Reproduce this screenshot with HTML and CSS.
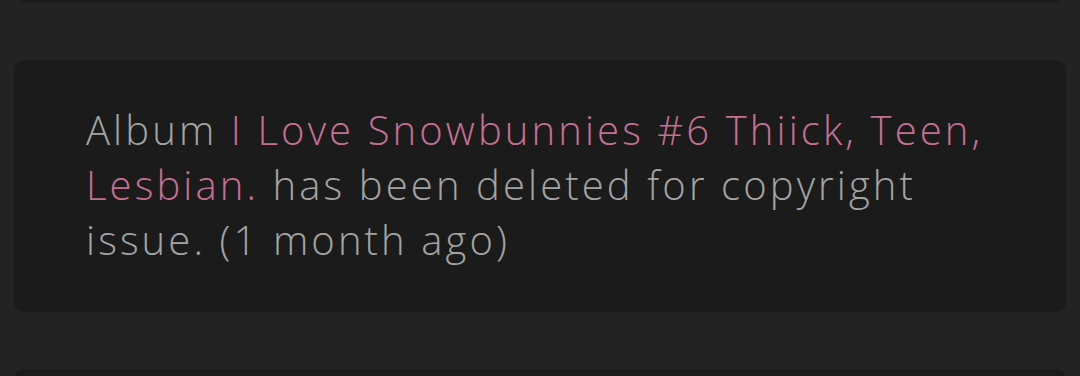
FILE: index.html
```html
<!DOCTYPE html>
<html lang="en">
<head>
    <meta charset="UTF-8">
    <meta name="viewport" content="width=device-width, initial-scale=1.0">
    <title>Notifications</title>
    <link rel="stylesheet" href="styles.css">
</head>
<body>
    <div class="feed">
        <div class="notice notice-cut-top"></div>
        <div class="notice">
            <p class="notice-text">
                Album <a href="#" class="album-link">I Love Snowbunnies #6 Thiick, Teen, Lesbian.</a>
                has been deleted for copyright issue. (1 month ago)
            </p>
        </div>
        <div class="notice notice-cut-bottom"></div>
    </div>
</body>
</html>
```

FILE: styles.css
```css
* {
    margin: 0;
    padding: 0;
    box-sizing: border-box;
}

body {
    background: #232323;
    font-family: 'Open Sans', sans-serif;
    height: 376px;
    overflow: hidden;
}

.feed {
    display: flex;
    flex-direction: column;
    gap: 57px;
    padding: 0 14px;
}

.notice {
    background: #1b1b1b;
    border-radius: 10px;
    padding: 42px 60px 45px 72px;
}

.notice-cut-top {
    height: 3px;
    padding: 0;
    margin: 0 6px;
    border-radius: 0 0 10px 10px;
}

.notice-cut-bottom {
    height: 20px;
    padding: 0;
    border-radius: 10px 10px 0 0;
}

.notice-text {
    font-size: 40px;
    font-weight: 300;
    line-height: 55px;
    letter-spacing: 3.1px;
    color: #a4a4a4;
}

.album-link {
    color: #c66f93;
    text-decoration: none;
}
```
